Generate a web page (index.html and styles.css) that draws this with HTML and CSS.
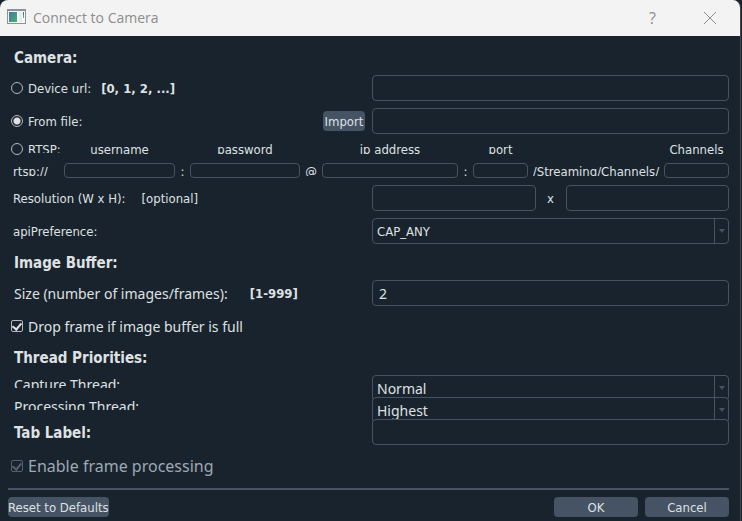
FILE: index.html
```html
<!DOCTYPE html>
<html lang="en">
<head>
<meta charset="utf-8">
<title>Connect to Camera</title>
<link rel="stylesheet" href="styles.css">
</head>
<body>
<div class="dialog" role="dialog" aria-labelledby="title">
  <header class="titlebar">
    <svg class="app-icon" viewBox="0 0 19 15" aria-hidden="true">
      <defs>
        <linearGradient id="pane" x1="0" y1="0" x2="1" y2="1">
          <stop offset="0" stop-color="#3f78a8"/>
          <stop offset="1" stop-color="#4fae68"/>
        </linearGradient>
      </defs>
      <rect x="0.5" y="0.5" width="18" height="14" fill="#f6f6f6" stroke="#8c939b"/>
      <path d="M0 1h19" stroke="#8c939b" stroke-width="2"/>
      <rect x="2" y="3" width="8" height="10" fill="url(#pane)"/>
      <rect x="12" y="3" width="3" height="10" fill="#e9ebed"/>
      <rect x="16" y="3" width="1" height="3" fill="#3f6f9c"/>
      <rect x="16" y="6" width="1" height="3" fill="#5fa98a"/>
    </svg>
    <h1 class="title" id="title">Connect to Camera</h1>
    <button class="caption-button" type="button" aria-label="Help">?</button>
    <button class="caption-button" type="button" aria-label="Close">
      <svg class="close-icon" viewBox="0 0 14 14" aria-hidden="true"><path d="M1 1l12 12M13 1L1 13"/></svg>
    </button>
  </header>

  <form class="content">
    <h2 class="heading">Camera:</h2>

    <div class="row">
      <div class="caption">
        <label class="choice"><input class="radio" type="radio" name="source">Device url:</label>
        <b class="hint">[0, 1, 2, ...]</b>
      </div>
      <input class="field" type="text" aria-label="Device url">
    </div>

    <div class="row">
      <div class="caption">
        <label class="choice"><input class="radio" type="radio" name="source" checked>From file:</label>
        <button class="button import" type="button">Import</button>
      </div>
      <input class="field" type="text" aria-label="File path">
    </div>

    <div class="rtsp">
      <label class="choice"><input class="radio" type="radio" name="source"><span class="rtsp-name">RTSP:</span></label>
      <label class="part user" for="user">username</label>
      <label class="part pass" for="pass">password</label>
      <label class="part ip" for="ip">ip address</label>
      <label class="part port" for="port">port</label>
      <label class="part channels" for="channels">Channels</label>
      <span class="part scheme">rtsp://</span>
      <input class="field" id="user" type="text">
      <span class="part">:</span>
      <input class="field" id="pass" type="password">
      <span class="part">@</span>
      <input class="field" id="ip" type="text">
      <span class="part">:</span>
      <input class="field" id="port" type="text">
      <span class="part">/Streaming/Channels/</span>
      <input class="field" id="channels" type="text">
    </div>

    <div class="row">
      <div class="caption indent"><label for="width">Resolution (W x H):</label><span class="optional">[optional]</span></div>
      <div class="size">
        <input class="field" id="width" type="text">
        <span>x</span>
        <input class="field" type="text" aria-label="Height">
      </div>
    </div>

    <div class="row">
      <label class="caption indent" for="api">apiPreference:</label>
      <div class="combo">
        <select class="field select" id="api"><option>CAP_ANY</option></select>
      </div>
    </div>

    <h2 class="heading">Image Buffer:</h2>

    <div class="row">
      <div class="caption indent large"><label for="frames">Size (number of images/frames):</label><b class="hint range">[1-999]</b></div>
      <input class="field large" id="frames" type="text" value="2">
    </div>

    <div class="row">
      <label class="choice large"><input class="check" type="checkbox" checked>Drop frame if image buffer is full</label>
    </div>

    <h2 class="heading">Thread Priorities:</h2>

    <div class="row tight">
      <label class="caption indent large clipped" for="capture">Capture Thread:</label>
      <div class="combo">
        <select class="field select large" id="capture"><option>Normal</option></select>
      </div>
    </div>

    <div class="row tight">
      <label class="caption indent large clipped" for="processing">Processing Thread:</label>
      <div class="combo">
        <select class="field select large" id="processing"><option>Highest</option></select>
      </div>
    </div>

    <div class="row">
      <label class="heading" for="tab">Tab Label:</label>
      <input class="field" id="tab" type="text">
    </div>

    <div class="row last">
      <label class="choice xlarge off"><input class="check" type="checkbox" checked disabled>Enable frame processing</label>
    </div>

    <footer class="footer">
      <button class="button" type="reset">Reset to Defaults</button>
      <div class="actions">
        <button class="button action" type="submit">OK</button>
        <button class="button action" type="button">Cancel</button>
      </div>
    </footer>
  </form>
</div>
</body>
</html>
```
FILE: styles.css
```css
:root {
  --bg: #19232d;
  --line: #455364;
  --text: #dfe1e2;
  --muted: #9da9b5;
  --small: 13px "DejaVu Sans Condensed", "DejaVu Sans", sans-serif;
}

* {
  box-sizing: border-box;
}

body {
  margin: 0;
  background: var(--bg);
  color: var(--text);
  font: var(--small);
}

.dialog {
  min-height: 100vh;
  margin-right: 1px;
  border-right: 1px solid #41474d;
  border-radius: 8px 8px 0 0;
  overflow: hidden;
}

.titlebar {
  display: flex;
  align-items: center;
  height: 36px;
  padding: 0 2px 0 7px;
  background: #f3f3f3;
  color: #8d8d8d;
}

.app-icon {
  width: 19px;
  height: 15px;
  margin-bottom: 3px;
}

.title {
  flex: 1;
  margin: 0 0 2px 7px;
  font: 14px "Open Sans", sans-serif;
}

.caption-button {
  display: grid;
  place-items: center;
  width: 57px;
  height: 34px;
  padding: 0;
  border: 0;
  background: none;
  color: inherit;
  font: 16px "Open Sans", sans-serif;
}

.close-icon {
  width: 14px;
  height: 14px;
  fill: none;
  stroke: currentColor;
}

.content {
  display: flex;
  flex-direction: column;
  gap: 7px;
  padding: 10px 11px 4px 8px;
}

.heading {
  height: 22px;
  margin: 0;
  padding-left: 6px;
  font: bold 15px/24px "DejaVu Sans Condensed", "DejaVu Sans", sans-serif;
}

.row {
  position: relative;
  display: grid;
  grid-template-columns: 1fr 1fr;
  align-items: center;
  gap: 7px;
  height: 26px;
}

.caption {
  display: flex;
  align-items: center;
}

.indent {
  padding-left: 5px;
}

.large {
  font: 14px "Noto Sans", sans-serif;
}

.caption.large {
  padding-left: 6px;
}

.xlarge {
  font: 16px "Noto Sans", sans-serif;
}

.choice {
  display: flex;
  align-items: center;
  gap: 5px;
  padding-left: 3px;
  white-space: nowrap;
}

.hint {
  margin-left: 10px;
  font: bold 13px "DejaVu Sans Condensed", "DejaVu Sans", sans-serif;
}

.range {
  margin-left: 22px;
}

.optional {
  margin-left: 16px;
}

.off {
  color: var(--muted);
}

.radio,
.check {
  appearance: none;
  flex: none;
  width: 12px;
  height: 12px;
  margin: 0;
  border: 1px solid #b4b8bc;
}

.radio {
  border-radius: 50%;
}

.radio:checked {
  background: radial-gradient(circle, var(--text) 3px, transparent 4px);
}

.check {
  display: grid;
  place-items: center;
  border-radius: 2px;
}

.check:checked::before {
  content: "";
  width: 4px;
  height: 7px;
  margin-bottom: 2px;
  border: solid var(--text);
  border-width: 0 2px 2px 0;
  rotate: 40deg;
}

.check:disabled,
.check:disabled::before {
  border-color: #54606d;
}

.field {
  display: block;
  width: 100%;
  min-width: 0;
  height: 26px;
  padding: 0 6px;
  border: 1px solid var(--line);
  border-radius: 4px;
  background: var(--bg);
  color: var(--text);
  font-family: inherit;
}

.combo {
  position: relative;
}

.select {
  appearance: none;
  padding: 0 18px 0 4px;
  font-size: 13px;
}

.select.large,
.field.large {
  font: 14px "Noto Sans", sans-serif;
}

.combo::before {
  content: "";
  position: absolute;
  top: 0;
  right: 0;
  width: 14px;
  height: 26px;
  border-left: 1px solid var(--line);
}

.combo::after {
  content: "";
  position: absolute;
  top: 11px;
  right: 4px;
  border: solid transparent;
  border-width: 4px 3px 0;
  border-top-color: var(--line);
}

.tight {
  align-items: start;
  height: 15px;
}

.tight .clipped {
  height: 13px;
  line-height: 19px;
  align-items: start;
  overflow: hidden;
}

.rtsp {
  display: grid;
  grid-template-columns: 56fr 111fr 15px 110fr 22px 136fr 15px 55fr 136px 65fr;
  grid-template-rows: 15px 15px;
  gap: 7px 0;
  text-align: center;
}

.rtsp .field {
  height: 15px;
}

.part {
  height: 13px;
  line-height: 18px;
  overflow: hidden;
  white-space: nowrap;
}

.user { grid-column: 2; }
.pass { grid-column: 4; }
.ip { grid-column: 6; }
.port { grid-column: 8; }
.channels { grid-column: 10; }

.scheme {
  padding-left: 5px;
  text-align: left;
}

.rtsp-name {
  height: 8px;
  line-height: 10px;
  overflow: hidden;
}

.size {
  display: grid;
  grid-template-columns: 1fr 30px 1fr;
  align-items: center;
  text-align: center;
}

.last {
  margin: 1px 0 2px;
}

.button {
  height: 20px;
  padding: 0;
  border: 0;
  border-radius: 4px;
  background: var(--line);
  color: var(--text);
  font: var(--small);
}

.import {
  width: 42px;
  margin-left: auto;
}

.footer {
  display: flex;
  justify-content: space-between;
  padding-top: 7px;
  border-top: 2px solid var(--line);
}

.actions {
  display: flex;
  gap: 7px;
}

.action {
  width: 84px;
}
```
